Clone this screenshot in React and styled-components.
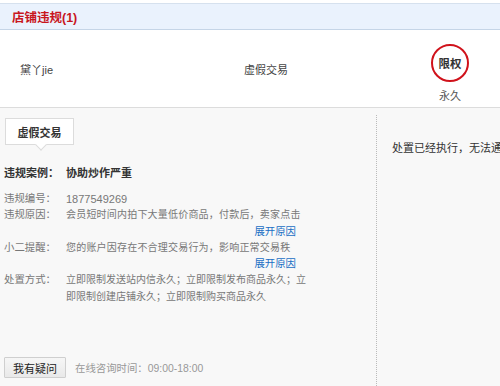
import React from 'react'
import styled, { createGlobalStyle } from 'styled-components'

const GlobalStyle = createGlobalStyle`
  html, body {
    margin: 0;
    padding: 0;
    background: #f8f8f8;
  }
  body {
    font-family: "Liberation Sans", "Noto Sans CJK SC", sans-serif;
    color: #666;
  }
`

const Page = styled.div`
  width: 500px;
  height: 386px;
  overflow: hidden;
  display: flex;
  flex-direction: column;
  background: #f8f8f8;
  padding-top: 3px;
  box-sizing: border-box;
  background-image: linear-gradient(#fff, #fff);
  background-size: 100% 3px;
  background-repeat: no-repeat;
`

const Header = styled.div`
  height: 25px;
  background: #eaf2fd;
  border-top: 1px solid #d6e1ee;
  border-bottom: 1px solid #c5d5e7;
  display: flex;
  align-items: center;
  padding-left: 12px;
`

const Title = styled.h2`
  margin: 0;
  font-size: 12.5px;
  font-weight: bold;
  color: #c8161d;
`

const Summary = styled.div`
  height: 77px;
  background: #fff;
  border-bottom: 1px solid #dcdcdc;
  display: flex;
  align-items: center;
`

const Cell = styled.div`
  width: ${p => (p.w ? `${p.w}px` : 'auto')};
  flex: ${p => (p.w ? 'none' : 1)};
  box-sizing: border-box;
  display: flex;
  flex-direction: column;
  align-items: ${p => p.align || 'flex-start'};
  padding-left: ${p => p.pl || 0}px;
  font-size: 11px;
  color: #444;
`

const Seal = styled.div`
  width: 34px;
  height: 34px;
  border: 2px solid #d0121b;
  border-radius: 50%;
  display: flex;
  align-items: center;
  justify-content: center;
  font-size: 11.5px;
  font-weight: bold;
  color: #333;
  margin-top: 9px;
`

const SealNote = styled.span`
  margin-top: 5px;
  font-size: 11px;
  color: #555;
`

const Body = styled.div`
  flex: 1;
  display: flex;
`

const Main = styled.div`
  width: 376px;
  display: flex;
  flex-direction: column;
  padding: 10px 0 8px 4px;
  box-sizing: border-box;
`

const Side = styled.div`
  flex: 1;
  margin-top: 7px;
  border-left: 1px dotted #bbb;
  padding: 24px 0 0 15px;
  font-size: 11px;
  color: #333;
  white-space: nowrap;
  overflow: hidden;
`

const Tab = styled.div`
  position: relative;
  align-self: flex-start;
  margin-left: 1px;
  width: 69px;
  height: 27px;
  box-sizing: border-box;
  background: #fff;
  border: 1px solid #dcdcdc;
  display: flex;
  align-items: center;
  justify-content: center;
  font-size: 11px;
  font-weight: bold;
  color: #333;

  &::after {
    content: '';
    position: absolute;
    left: 31px;
    bottom: -5px;
    width: 7px;
    height: 7px;
    background: #fff;
    border-right: 1px solid #dcdcdc;
    border-bottom: 1px solid #dcdcdc;
    transform: rotate(45deg);
  }
`

const CaseLine = styled.div`
  margin-top: 19px;
  display: flex;
  font-size: 11px;
  font-weight: bold;
  color: #333;
`

const Label = styled.span`
  width: 62px;
  flex-shrink: 0;
  font-size: 10.4px;
  color: #777;
`

const CaseLabel = styled(Label)`
  font-size: 11px;
  color: #333;
`

const Details = styled.div`
  margin-top: 11px;
  display: flex;
  flex-direction: column;
`

const Row = styled.div`
  display: flex;
  line-height: 16.3px;
`

const Value = styled.div`
  width: ${p => p.w || 246}px;
  font-size: ${p => p.size || 10}px;
  color: #777;
  white-space: ${p => (p.clip ? 'nowrap' : 'normal')};
  letter-spacing: ${p => (p.clip ? '0.2px' : '0')};
`

const Expand = styled.a`
  display: block;
  text-align: right;
  padding-right: 16px;
  color: #1a6fc4;
  font-size: 10.4px;
  cursor: pointer;
`

const Footer = styled.div`
  margin-top: auto;
  display: flex;
  align-items: center;
  gap: 9px;
`

const AskButton = styled.button`
  height: 21px;
  padding: 0 8px;
  border: 1px solid #cfcfcf;
  border-radius: 1px;
  background: linear-gradient(#f6f6f6, #e9e9e9);
  font-family: inherit;
  font-size: 11px;
  color: #222;
  cursor: pointer;
`

const Hours = styled.span`
  font-size: 10.4px;
  color: #999;
`

export default function App() {
  return (
    <>
      <GlobalStyle />
      <Page>
        <Header>
          <Title>店铺违规(1)</Title>
        </Header>
        <Summary>
          <Cell w={244} pl={20}>黛丫jie</Cell>
          <Cell>虚假交易</Cell>
          <Cell w={100} align="center">
            <Seal>限权</Seal>
            <SealNote>永久</SealNote>
          </Cell>
        </Summary>
        <Body>
          <Main>
            <Tab>虚假交易</Tab>
            <CaseLine>
              <CaseLabel>违规案例：</CaseLabel>
              <span>协助炒作严重</span>
            </CaseLine>
            <Details>
              <Row>
                <Label>违规编号：</Label>
                <Value size={11}>1877549269</Value>
              </Row>
              <Row>
                <Label>违规原因：</Label>
                <div>
                  <Value clip>会员短时间内拍下大量低价商品，付款后，卖家点击</Value>
                  <Expand>展开原因</Expand>
                </div>
              </Row>
              <Row>
                <Label>小二提醒：</Label>
                <div>
                  <Value clip>您的账户因存在不合理交易行为，影响正常交易秩</Value>
                  <Expand>展开原因</Expand>
                </div>
              </Row>
              <Row>
                <Label>处置方式：</Label>
                <Value>立即限制发送站内信永久；立即限制发布商品永久；立即限制创建店铺永久；立即限制购买商品永久</Value>
              </Row>
            </Details>
            <Footer>
              <AskButton>我有疑问</AskButton>
              <Hours>在线咨询时间：09:00-18:00</Hours>
            </Footer>
          </Main>
          <Side>处置已经执行，无法通过申诉撤销。</Side>
        </Body>
      </Page>
    </>
  )
}
